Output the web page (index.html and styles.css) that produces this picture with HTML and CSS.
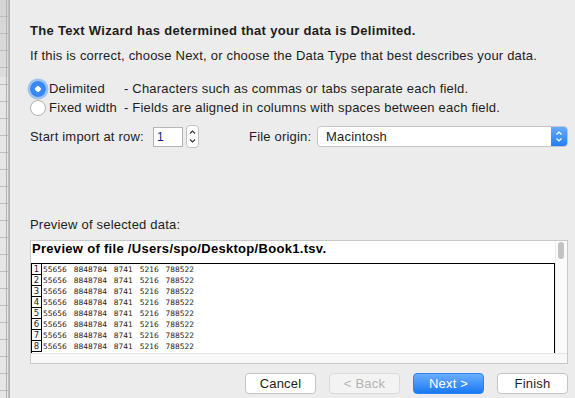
FILE: index.html
```html
<!DOCTYPE html>
<html lang="en">
<head>
  <meta charset="UTF-8" />
  <title>Text Import Wizard</title>
  <link rel="stylesheet" href="styles.css">
</head>
<body>
  <div class="sheet"></div>
  <div class="dialog">
    <div class="title">The Text Wizard has determined that your data is Delimited.</div>
    <div class="subtitle">If this is correct, choose Next, or choose the Data Type that best describes your data.</div>

    <div class="radios">
      <div class="radio-row">
        <span class="radio checked"></span>
        <span class="radio-label">Delimited</span>
        <span class="radio-desc">- Characters such as commas or tabs separate each field.</span>
      </div>
      <div class="radio-row">
        <span class="radio"></span>
        <span class="radio-label">Fixed width</span>
        <span class="radio-desc">- Fields are aligned in columns with spaces between each field.</span>
      </div>
    </div>

    <div class="import-row">
      <span class="field-label row-label">Start import at row:</span>
      <span class="num-input">1</span>
      <span class="stepper">
        <svg width="13" height="23" viewBox="0 0 13 23">
          <path d="M4 8.5 L6.5 6 L9 8.5" fill="none" stroke="#333" stroke-width="1.1"/>
          <path d="M4 14.5 L6.5 17 L9 14.5" fill="none" stroke="#333" stroke-width="1.1"/>
        </svg>
      </span>
      <span class="field-label origin-label">File origin:</span>
      <span class="popup">
        <span class="popup-text">Macintosh</span>
        <span class="popup-arrows">
          <svg width="16" height="21" viewBox="0 0 16 21">
            <path d="M5.5 8.5 L8 6 L10.5 8.5" fill="none" stroke="#fff" stroke-width="1.2"/>
            <path d="M5.5 12.5 L8 15 L10.5 12.5" fill="none" stroke="#fff" stroke-width="1.2"/>
          </svg>
        </span>
      </span>
    </div>

    <div class="preview-label">Preview of selected data:</div>

    <div class="preview">
      <div class="preview-main">
        <div class="preview-head">Preview of file /Users/spo/Desktop/Book1.tsv.</div>
        <div class="data-table">
          <div class="data-row"><span class="row-num">1</span><span class="row-data">55656  8848784  8741  5216  788522</span></div>
          <div class="data-row"><span class="row-num">2</span><span class="row-data">55656  8848784  8741  5216  788522</span></div>
          <div class="data-row"><span class="row-num">3</span><span class="row-data">55656  8848784  8741  5216  788522</span></div>
          <div class="data-row"><span class="row-num">4</span><span class="row-data">55656  8848784  8741  5216  788522</span></div>
          <div class="data-row"><span class="row-num">5</span><span class="row-data">55656  8848784  8741  5216  788522</span></div>
          <div class="data-row"><span class="row-num">6</span><span class="row-data">55656  8848784  8741  5216  788522</span></div>
          <div class="data-row"><span class="row-num">7</span><span class="row-data">55656  8848784  8741  5216  788522</span></div>
          <div class="data-row"><span class="row-num">8</span><span class="row-data">55656  8848784  8741  5216  788522</span></div>
        </div>
      </div>
      <div class="vscroll"><span class="thumb"></span></div>
      <div class="hscroll"></div>
    </div>

    <div class="buttons">
      <button class="btn">Cancel</button>
      <button class="btn disabled">&lt; Back</button>
      <button class="btn primary">Next &gt;</button>
      <button class="btn">Finish</button>
    </div>
  </div>
</body>
</html>
```

FILE: styles.css
```css
* { box-sizing: border-box; }
body {
  margin: 0;
  display: flex;
  height: 398px;
  overflow: hidden;
  font-family: 'Liberation Sans', Arial, sans-serif;
  font-size: 13px;
  letter-spacing: 0.2px;
  color: #1d1d1d;
  background: #ececec;
}
.sheet {
  width: 10px;
  flex: none;
  background:
    linear-gradient(to right, transparent 8px, #c4c4c4 8px, #a8a8a8 10px),
    linear-gradient(to right, transparent 6px, #b4b4b4 6px, #b4b4b4 7px, transparent 7px),
    repeating-linear-gradient(to bottom, transparent 0, transparent 16px, #bdbdbd 16px, #bdbdbd 17px),
    linear-gradient(to bottom, #d4d4d4 0, #dcdcdc 77px, #e6e6e6 77px);
}
.dialog {
  flex: 1;
  display: flex;
  flex-direction: column;
  padding: 23px 7px 0 20px;
}
.title {
  font-weight: bold;
  letter-spacing: 0.3px;
  line-height: 16px;
}
.subtitle {
  margin-top: 9px;
  line-height: 16px;
}
.radios {
  margin-top: 15px;
}
.radio-row {
  display: flex;
  align-items: center;
  height: 19px;
}
.radio {
  width: 16px;
  height: 16px;
  border-radius: 50%;
  border: 1px solid #b0b0b0;
  background: #fff;
  margin-right: 3px;
  flex: none;
}
.radio.checked {
  border: none;
  background: radial-gradient(circle, #fff 0, #fff 2.5px, #3a8cf8 3px, #2f80f3 100%);
  box-shadow: 0 0 0 2.5px rgba(96, 160, 245, 0.55);
}
.radio-label {
  width: 75px;
  flex: none;
}
.import-row {
  margin-top: 8px;
  height: 23px;
  display: flex;
  align-items: center;
}
.field-label {
  white-space: nowrap;
  flex: none;
}
.row-label {
  width: 119px;
}
.num-input {
  margin-left: 4px;
  width: 30px;
  height: 20px;
  border: 1px solid #b4b4b4;
  background: #fff;
  color: #1a1a8c;
  font-size: 12px;
  line-height: 18px;
  padding-left: 3px;
}
.stepper {
  margin-left: 3px;
  width: 13px;
  height: 23px;
  border: 1px solid #c3c3c3;
  border-radius: 4px;
  background: #fff;
  display: flex;
}
.stepper svg { margin: -1px; }
.origin-label {
  margin-left: 50px;
  width: 68px;
}
.popup {
  flex: 1;
  height: 21px;
  border: 1px solid #c6c6c6;
  border-radius: 4px;
  background: #fff;
  display: flex;
  align-items: center;
  overflow: hidden;
}
.popup-text {
  flex: 1;
  padding-left: 8px;
}
.popup-arrows {
  width: 16px;
  height: 21px;
  background: linear-gradient(#69adfd, #1f7cf7);
  display: flex;
}
.preview-label {
  margin-top: 69px;
  line-height: 16px;
}
.preview {
  margin-top: 7px;
  height: 124px;
  border: 1px solid #c8c8c8;
  background: #fff;
  display: grid;
  grid-template-columns: 1fr 12px;
  grid-template-rows: 1fr 10px;
}
.preview-main {
  overflow: hidden;
}
.preview-head {
  height: 22px;
  padding-left: 1px;
  font-weight: bold;
  letter-spacing: 0.3px;
  color: #000;
  line-height: 16px;
}
.data-table {
  border: 1px solid #000;
  border-bottom: none;
  height: 100px;
  letter-spacing: 0;
}
.data-row {
  display: flex;
  height: 11px;
}
.row-num {
  width: 10px;
  border-right: 1px solid #000;
  border-bottom: 1px solid #000;
  font-family: 'DejaVu Sans', Verdana, sans-serif;
  font-size: 8.5px;
  line-height: 10px;
  text-align: center;
}
.row-data {
  padding-left: 1px;
  font-family: 'DejaVu Sans', Verdana, sans-serif;
  font-size: 7.5px;
  line-height: 11px;
  word-spacing: 1px;
  white-space: pre;
  color: #2a1a10;
}
.vscroll {
  background: #fafafa;
  border-left: 1px solid #ececec;
  padding: 1px 2px;
}
.thumb {
  display: block;
  width: 6px;
  height: 17px;
  border-radius: 3px;
  background: #c2c2c2;
}
.hscroll {
  grid-column: 1 / 3;
  background: #f8f8f8;
  border-top: 1px solid #e6e6e6;
}
.buttons {
  margin-top: 9px;
  display: flex;
  justify-content: flex-end;
  gap: 13px;
}
.btn {
  width: 71px;
  height: 21px;
  border: 1px solid #c4c4c4;
  border-radius: 4px;
  background: #fff;
  font-family: 'Liberation Sans', Arial, sans-serif;
  font-size: 13px;
  letter-spacing: 0.2px;
  color: #1d1d1d;
  padding: 0;
}
.btn.disabled {
  background: #f3f3f3;
  border-color: #dadada;
  color: #b4b4b4;
}
.btn.primary {
  background: linear-gradient(#6aaefd, #1a79f6);
  border-color: #2d83f2;
  color: #fff;
}
```
